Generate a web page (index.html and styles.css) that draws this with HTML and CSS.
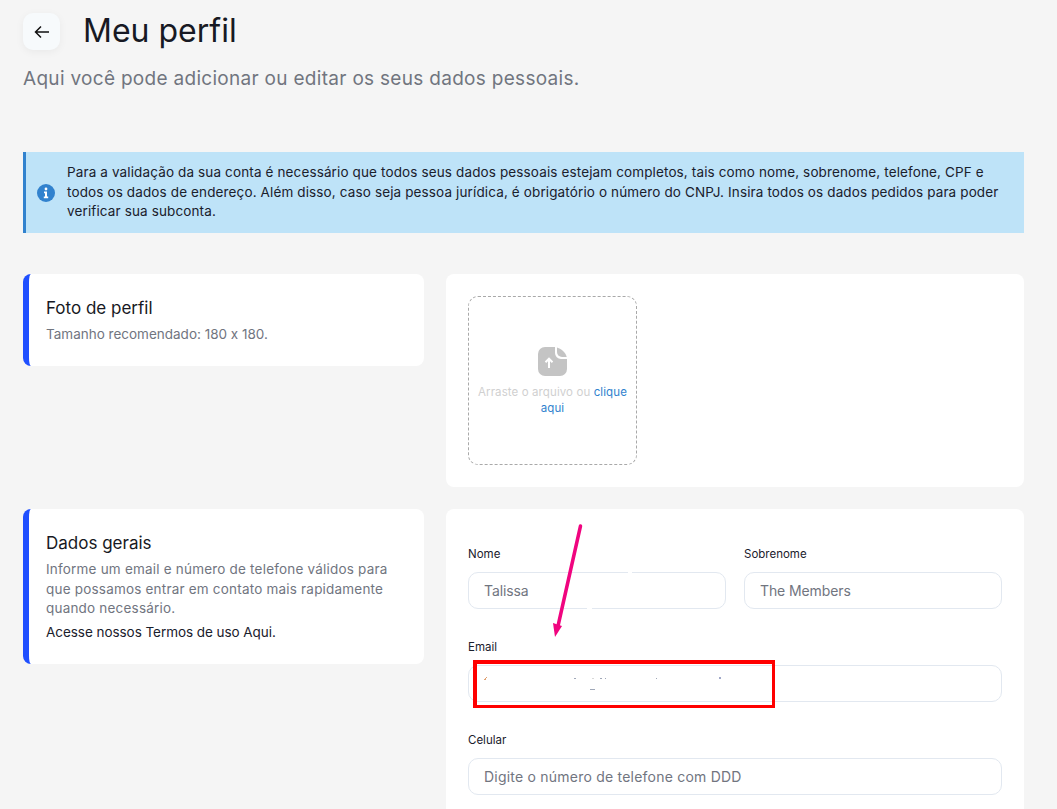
FILE: index.html
```html
<!DOCTYPE html>
<html lang="pt-BR">
<head>
<meta charset="utf-8">
<title>Meu perfil</title>
<link rel="stylesheet" href="styles.css">
</head>
<body>
<main class="page">
  <header class="head">
    <button class="back" type="button" aria-label="Voltar">
      <svg width="16" height="16" viewBox="0 0 16 16" fill="none" stroke="#111" stroke-width="1.5"><path d="M15 8H1.500M7 2.500 1.500 8 7 13.500"/></svg>
    </button>
    <h1>Meu perfil</h1>
  </header>
  <p class="sub">Aqui você pode adicionar ou editar os seus dados pessoais.</p>

  <div class="alert">
    <svg class="alert-icon" width="18" height="18" viewBox="0 0 18 18"><circle cx="9" cy="9" r="9" fill="#3182ce"/><circle cx="9" cy="5" r="1.400" fill="#fff"/><path d="M7 7.600h3v5h1.200v1.600H6.800v-1.600H8V9.200H7z" fill="#fff"/></svg>
    <p>Para a validação da sua conta é necessário que todos seus dados pessoais estejam completos, tais como nome, sobrenome, telefone, CPF e todos os dados de endereço. Além disso, caso seja pessoa jurídica, é obrigatório o número do CNPJ. Insira todos os dados pedidos para poder verificar sua subconta.</p>
  </div>

  <section class="row row-photo">
    <div class="side">
      <h2>Foto de perfil</h2>
      <p>Tamanho recomendado: 180 x 180.</p>
    </div>
    <div class="panel">
      <div class="drop">
        <svg width="29" height="29" viewBox="0 0 29 29"><path d="M7 0h10v6a6 6 0 0 0 6 6h6v10a7 7 0 0 1-7 7H7a7 7 0 0 1-7-7V7a7 7 0 0 1 7-7z" fill="#c4c4c4"/><path d="M19 .5c5 1.500 8.500 5 9.700 9.500H24a5 5 0 0 1-5-5z" fill="#c4c4c4"/><path d="M11 21v-9M7.500 15.200 11 11.700l3.500 3.500" fill="none" stroke="#fff" stroke-width="2"/></svg>
        <p class="drop-text">Arraste o arquivo ou <a href="#">clique</a> <a href="#">aqui</a></p>
      </div>
    </div>
  </section>

  <section class="row">
    <div class="side">
      <h2>Dados gerais</h2>
      <p class="long">Informe um email e número de telefone válidos para que possamos entrar em contato mais rapidamente quando necessário.</p>
      <p class="terms">Acesse nossos Termos de uso Aqui.</p>
    </div>
    <div class="panel form">
      <div class="pair">
        <label class="field"><span>Nome</span><input type="text" value="Talissa"></label>
        <label class="field"><span>Sobrenome</span><input type="text" value="The Members"></label>
      </div>
      <label class="field"><span>Email</span><input type="text" value=""></label>
      <label class="field"><span>Celular</span><input type="text" placeholder="Digite o número de telefone com DDD"></label>
    </div>
  </section>
</main>

<div class="redbox"></div>
<svg class="marks" width="1057" height="809" viewBox="0 0 1057 809">
  <rect x="628" y="571" width="4" height="3" fill="#fff"/>
  <rect x="587" y="607" width="5" height="3" fill="#fff"/>
  <path d="M580.500 526 558 626" stroke="#f0047f" stroke-width="3.500" stroke-linecap="round" fill="none"/>
  <path d="M553 623 562 626 555 637z" fill="#f0047f"/>
  <path d="M484 680h2v-2h1v-1h-1v1h-1v1h-1z" fill="#e0a070"/>
  <rect x="574" y="678" width="2" height="1" fill="#a0a8b8"/>
  <rect x="592" y="678" width="2" height="1" fill="#d8d8d8"/>
  <rect x="600" y="678" width="2" height="1" fill="#a0a8b8"/>
  <rect x="605" y="678" width="1" height="1" fill="#a0a8b8"/>
  <rect x="590" y="689" width="5" height="1" fill="#a0a8b8"/>
  <rect x="656" y="678" width="1" height="1" fill="#a0a8b8"/>
  <rect x="719" y="677" width="2" height="2" fill="#a0a8c8"/>
</svg>
</body>
</html>
```
FILE: styles.css
```css
* { box-sizing: border-box; }
html, body { margin: 0; height: 809px; overflow: hidden; }
body { background: #f5f5f5; font-family: Inter, "Noto Sans", sans-serif; font-feature-settings: "calt" 0; color: #1a202c; position: relative; }
.page { width: 1001px; margin-left: 23px; padding-top: 13px; }
.head { display: flex; align-items: center; gap: 23px; height: 37px; }
.back { width: 37px; height: 37px; border: 0; border-radius: 10px; background: #f7fafc; box-shadow: 0 2px 8px rgba(0,0,0,.05); display: flex; align-items: center; justify-content: center; padding: 0; }
h1 { margin: -2px 0 0; font-size: 32px; font-weight: 400; line-height: 37px; color: #171923; }
.sub { margin: 14px 0 0; font-size: 19px; letter-spacing: .3px; line-height: 30px; color: #71757f; height: 30px; }
.alert { margin-top: 58px; height: 81px; background: #bee3f8; border-left: 3px solid #3182ce; display: flex; align-items: center; padding-left: 11px; gap: 12px; }
.alert p { margin: 0; font-size: 13.500px; letter-spacing: .13px; line-height: 19.500px; color: #1a202c; width: 940px; }
.alert-icon { flex: none; }
.row { display: flex; gap: 22px; align-items: flex-start; margin-top: 22px; }
.row-photo { margin-top: 41px; }
.side { width: 401px; flex: none; background: #fff; border-left: 6px solid #1f4fff; border-radius: 8px; padding: 22px 24px 21.500px 17px; }
.side h2 { margin: 0 0 5px; font-size: 17px; line-height: 24px; font-weight: 400; color: #171923; }
.side p { margin: 0; font-size: 13.500px; line-height: 19.500px; color: #71757f; }
.side p.long { letter-spacing: .2px; }
.side p.terms { margin: 3px 0 1px; line-height: 20px; letter-spacing: -.05px; color: #1a202c; }
.panel { flex: 1; background: #fff; border-radius: 8px; padding: 22px; }
.drop { width: 169px; height: 169px; border: 1px dashed #a9a9a9; border-radius: 10px; display: flex; flex-direction: column; align-items: center; padding: 50px 8px 0; }
.drop-text { margin: 8px 0 0; text-align: center; font-size: 11.500px; letter-spacing: .1px; line-height: 16px; color: #d0d0d0; }
.drop-text a { color: #3182ce; text-decoration: none; }
.form { display: flex; flex-direction: column; gap: 31px; padding-top: 38px; height: 400px; }
.pair { display: flex; gap: 18px; }
.pair .field { flex: 1; }
.field { display: flex; flex-direction: column; gap: 11px; }
.field span { font-size: 11.500px; line-height: 14px; color: #1a202c; }
.field input { width: 100%; height: 37px; border: 1px solid #e2e8f0; border-radius: 10px; padding: 0 15px; font: inherit; font-size: 14px; letter-spacing: -.1px; color: #71757f; background: #fff; outline: 0; }
.field input::placeholder { color: #71757f; opacity: 1; letter-spacing: .22px; }
.redbox { position: absolute; left: 473px; top: 660px; width: 302px; height: 48px; border-style: solid; border-color: #f00; border-width: 4px 3px 3px 4px; }
.marks { position: absolute; left: 0; top: 0; pointer-events: none; }
```
